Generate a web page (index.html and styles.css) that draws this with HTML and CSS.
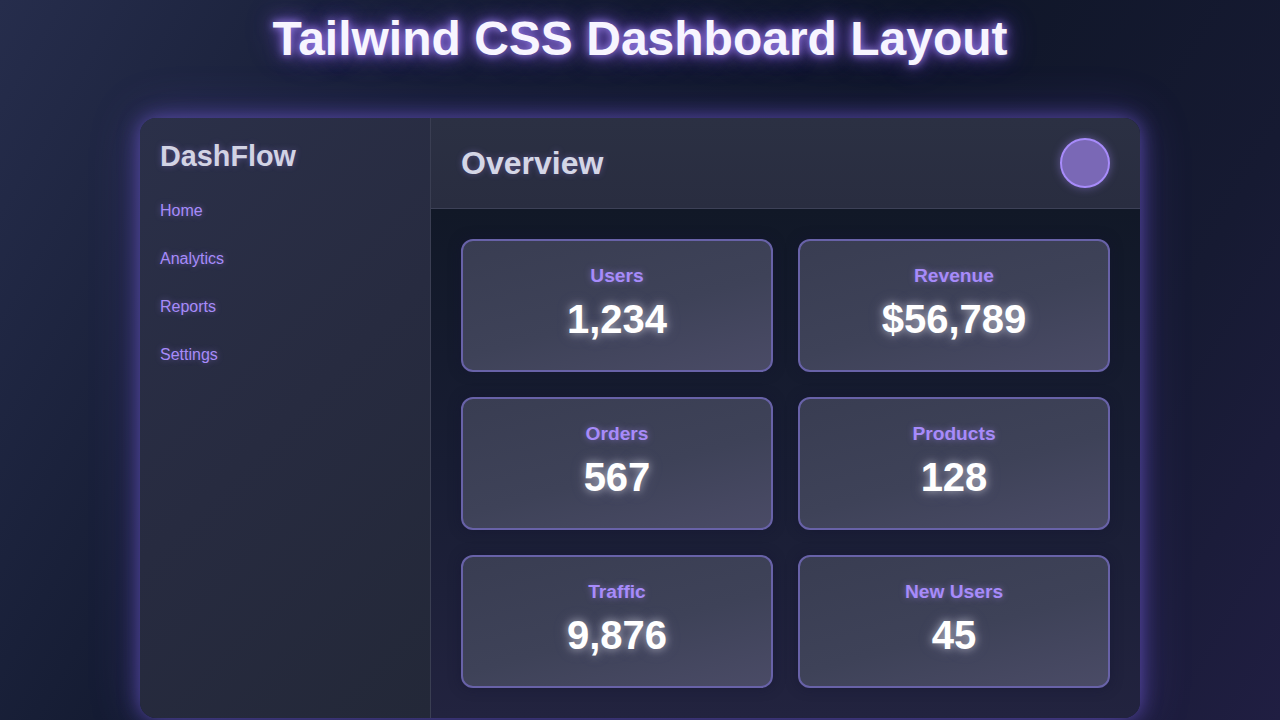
FILE: index.html
```html
<!DOCTYPE html>
<html lang="en">
<head>
<meta charset="utf-8">
<title>Tailwind CSS Dashboard Layout</title>
<link rel="stylesheet" href="styles.css">
</head>
<body>
<h1 class="page-title">Tailwind CSS Dashboard Layout</h1>
<div class="dashboard">
  <aside class="sidebar">
    <div class="brand">DashFlow</div>
    <nav class="nav">
      <a class="nav-link" href="#">Home</a>
      <a class="nav-link" href="#">Analytics</a>
      <a class="nav-link" href="#">Reports</a>
      <a class="nav-link" href="#">Settings</a>
    </nav>
  </aside>
  <main class="main">
    <header class="topbar">
      <h2 class="topbar-title">Overview</h2>
      <div class="avatar"></div>
    </header>
    <section class="cards">
      <div class="card"><div class="card-label">Users</div><div class="card-value">1,234</div></div>
      <div class="card"><div class="card-label">Revenue</div><div class="card-value">$56,789</div></div>
      <div class="card"><div class="card-label">Orders</div><div class="card-value">567</div></div>
      <div class="card"><div class="card-label">Products</div><div class="card-value">128</div></div>
      <div class="card"><div class="card-label">Traffic</div><div class="card-value">9,876</div></div>
      <div class="card"><div class="card-label">New Users</div><div class="card-value">45</div></div>
    </section>
  </main>
</div>
</body>
</html>
```
FILE: styles.css
```css
* { box-sizing: border-box; }
html, body { height: 100%; }
body {
  margin: 0;
  height: 720px;
  overflow: hidden;
  font-family: "Liberation Sans", Arial, sans-serif;
  background: linear-gradient(120deg, #262d4c 0%, #151c33 30%, #0f1628 55%, #161a32 80%, #201e42 100%);
  color: #e5e7eb;
}
.page-title {
  margin: 10px 0 0;
  font-size: 48px;
  line-height: 1.2;
  font-weight: 700;
  text-align: center;
  color: #f7f5ff;
  text-shadow: 0 0 8px rgba(167, 139, 250, 0.95), 0 0 18px rgba(139, 92, 246, 0.75), 0 0 32px rgba(139, 92, 246, 0.45);
}
.dashboard {
  width: 1000px;
  height: 600px;
  margin: 50px auto 0;
  display: flex;
  border-radius: 16px;
  overflow: hidden;
  box-shadow: 0 0 20px rgba(124, 100, 230, 0.6), 0 0 50px rgba(110, 80, 220, 0.3);
}
.sidebar {
  width: 291px;
  flex-shrink: 0;
  padding: 21px 20px 20px;
  background: linear-gradient(135deg, #2b3049 0%, #272b40 50%, #232838 100%);
  border-right: 1px solid #3a3e52;
}
.brand {
  font-size: 28.8px;
  line-height: 1.2;
  font-weight: 700;
  color: #d2d3e4;
  text-shadow: 0 0 6px rgba(167, 139, 250, 0.35);
  margin-bottom: 14px;
}
.nav { display: flex; flex-direction: column; }
.nav-link {
  display: block;
  padding: 12px 0;
  font-size: 16px;
  line-height: 24px;
  color: #a78bfa;
  text-decoration: none;
  text-shadow: 0 0 6px rgba(167, 139, 250, 0.45);
}
.main {
  flex: 1;
  display: flex;
  flex-direction: column;
  min-width: 0;
}
.topbar {
  height: 91px;
  flex-shrink: 0;
  padding: 0 30px;
  display: flex;
  align-items: center;
  justify-content: space-between;
  background: linear-gradient(180deg, #2b3043 0%, #292d40 100%);
  border-bottom: 1px solid #3d4157;
}
.topbar-title {
  margin: 0;
  padding-top: 2px;
  font-size: 32px;
  line-height: 1.2;
  font-weight: 700;
  color: #d4d6e6;
  text-shadow: 0 0 6px rgba(167, 139, 250, 0.35);
}
.avatar {
  width: 50px;
  height: 50px;
  border-radius: 50%;
  background: #7a68b6;
  border: 2px solid #a78bfa;
  box-shadow: 0 0 10px rgba(167, 139, 250, 0.45);
}
.cards {
  flex: 1;
  padding: 30px;
  display: grid;
  grid-template-columns: 1fr 1fr;
  grid-template-rows: 1fr 1fr 1fr;
  gap: 25px;
  background: linear-gradient(180deg, #111827 0%, #181d33 50%, #22233f 100%);
}
.card {
  border: 2px solid #6862a8;
  border-radius: 12px;
  padding-top: 23px;
  text-align: center;
  background: linear-gradient(165deg, #393d52 0%, #3e4258 55%, #4a4b66 100%);
  box-shadow: 0 0 12px rgba(20, 20, 50, 0.5);
}
.card-label {
  font-size: 19.2px;
  line-height: 23px;
  font-weight: 700;
  color: #a78bfa;
  text-shadow: 0 0 6px rgba(167, 139, 250, 0.55);
  margin-bottom: 8px;
}
.card-value {
  font-size: 40px;
  line-height: 48px;
  font-weight: 700;
  color: #ffffff;
  text-shadow: 0 0 8px rgba(255, 255, 255, 0.55), 0 0 16px rgba(200, 190, 255, 0.25);
}
```
